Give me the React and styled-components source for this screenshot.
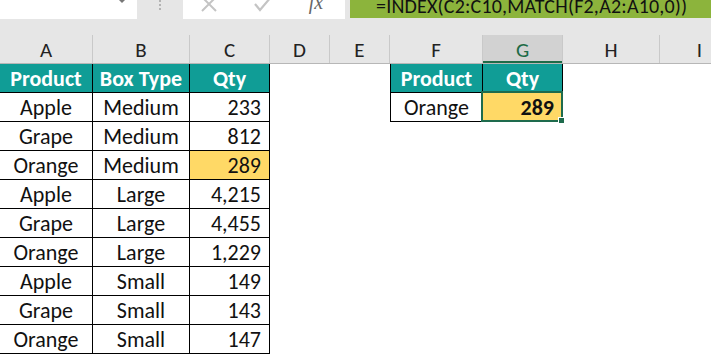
import React from 'react';
import styled, {createGlobalStyle, css} from 'styled-components';

const GlobalStyle = createGlobalStyle`
  html, body {
    margin: 0;
    padding: 0;
    background: #fff;
    overflow: hidden;
  }
  body {
    font-family: Carlito, Lato, "Open Sans", sans-serif;
  }
`;

const COLS = [
  {key: 'A', width: 93},
  {key: 'B', width: 97},
  {key: 'C', width: 80},
  {key: 'D', width: 60},
  {key: 'E', width: 60},
  {key: 'F', width: 93},
  {key: 'G', width: 80},
  {key: 'H', width: 97},
  {key: 'I', width: 80},
];

const gridTemplate = COLS.map((c) => `${c.width}px`).join(' ');

const Chrome = styled.div`
  background: #e6e6e6;
  overflow: hidden;
`;

const FormulaBar = styled.div`
  display: flex;
  align-items: stretch;
  height: 30px;
  margin-top: -11px;
`;

const NameBox = styled.div`
  width: 137px;
  background: #fff;
  display: flex;
  justify-content: flex-end;
  align-items: flex-end;
  padding-right: 10px;
  box-sizing: border-box;
`;

const Caret = styled.div`
  width: 0;
  height: 0;
  border-left: 5px solid transparent;
  border-right: 5px solid transparent;
  border-top: 5px solid #777;
  margin-bottom: 16px;
`;

const Splitter = styled.div`
  width: 46px;
  display: flex;
  justify-content: center;
  align-items: flex-end;
  padding-bottom: 9px;
  box-sizing: border-box;
`;

const Dots = styled.div`
  width: 2px;
  height: 10px;
  background: repeating-linear-gradient(#b3b3b3 0 2px, transparent 2px 4px);
`;

const FxBox = styled.div`
  width: 162px;
  background: #fff;
  display: flex;
  align-items: flex-end;
  padding-bottom: 6px;
  box-sizing: border-box;
`;

const IconSlot = styled.div`
  width: ${(p) => p.w}px;
  margin-left: ${(p) => p.ml}px;
  display: flex;
  justify-content: center;
`;

const Fx = styled.span`
  font-family: "Liberation Serif", serif;
  font-style: italic;
  font-size: 20px;
  color: #666;
  line-height: 1;
  margin-bottom: 1px;
`;

const FormulaInput = styled.div`
  flex: 1;
  margin-left: 5px;
  height: 29px;
  background: #8cb43c;
  display: flex;
  align-items: flex-end;
  padding-left: 26px;
  font-family: Carlito, Lato, sans-serif;
  font-size: 20px;
  color: #111;
  white-space: nowrap;
  overflow: hidden;
`;

const FormulaText = styled.span`
  line-height: 1;
  margin-bottom: 2px;
  letter-spacing: 0.2px;
`;

const HeaderRow = styled.div`
  display: grid;
  grid-template-columns: ${gridTemplate};
  margin-top: 16px;
  height: 28px;
  border-bottom: 1px solid #b7b7b7;
`;

const ColHead = styled.div`
  display: flex;
  align-items: center;
  justify-content: center;
  font-size: 21px;
  color: #222;
  border-right: 1px solid #c9c9c9;
  box-sizing: border-box;
  padding-top: 2px;
  ${(p) => p.active && css`
    background: #d2d2d2;
    color: #1e6b47;
    box-shadow: inset 0 -2px 0 #1e6b47;
  `}
`;

const Sheet = styled.div`
  display: grid;
  grid-template-columns: ${gridTemplate};
  grid-auto-rows: 29px;
  background: #fff;
`;

const Cell = styled.div`
  position: relative;
  display: flex;
  align-items: center;
  justify-content: ${(p) => (p.align === 'right' ? 'flex-end' : 'center')};
  padding-right: ${(p) => (p.align === 'right' ? '8px' : '0')};
  box-sizing: border-box;
  font-size: 22px;
  color: #111;
  white-space: nowrap;
  ${(p) => p.boxed && css`
    border-right: 1px solid #000;
    border-bottom: 1px solid #000;
  `}
  ${(p) => p.first && css`
    border-left: 1px solid #000;
  `}
  ${(p) => p.head && css`
    background: #109d96;
    color: #fff;
    font-weight: 700;
  `}
  ${(p) => p.hot && css`
    background: #ffd966;
  `}
  ${(p) => p.bold && css`
    font-weight: 700;
  `}
`;

const Selection = styled.div`
  position: absolute;
  left: -2px;
  top: -2px;
  right: -1px;
  bottom: -1px;
  border: 2px solid #1e6b4d;
  pointer-events: none;
`;

const FillHandle = styled.div`
  position: absolute;
  right: -4px;
  bottom: -4px;
  width: 5px;
  height: 5px;
  background: #1e6b4d;
  border: 1px solid #fff;
`;

const data = [
  ['Apple', 'Medium', '233'],
  ['Grape', 'Medium', '812'],
  ['Orange', 'Medium', '289'],
  ['Apple', 'Large', '4,215'],
  ['Grape', 'Large', '4,455'],
  ['Orange', 'Large', '1,229'],
  ['Apple', 'Small', '149'],
  ['Grape', 'Small', '143'],
  ['Orange', 'Small', '147'],
];

const CrossIcon = () => (
  <svg width="18" height="18" viewBox="0 0 18 18">
    <path d="M2 2 L16 16 M16 2 L2 16" stroke="#c4c4c4" strokeWidth="2" fill="none" />
  </svg>
);

const CheckIcon = () => (
  <svg width="20" height="18" viewBox="0 0 20 18">
    <path d="M2 9 L7 15 L18 2" stroke="#c4c4c4" strokeWidth="2.2" fill="none" />
  </svg>
);

const renderRow = (rowIndex) => {
  const cells = [];
  if (rowIndex === 0) {
    cells.push(<Cell key="a" boxed head>Product</Cell>);
    cells.push(<Cell key="b" boxed head>Box Type</Cell>);
    cells.push(<Cell key="c" boxed head>Qty</Cell>);
  } else {
    const [product, box, qty] = data[rowIndex - 1];
    cells.push(<Cell key="a" boxed>{product}</Cell>);
    cells.push(<Cell key="b" boxed>{box}</Cell>);
    cells.push(<Cell key="c" boxed align="right" hot={rowIndex === 3}>{qty}</Cell>);
  }
  cells.push(<Cell key="d" />);
  cells.push(<Cell key="e" />);
  if (rowIndex === 0) {
    cells.push(<Cell key="f" boxed first head>Product</Cell>);
    cells.push(<Cell key="g" boxed head>Qty</Cell>);
  } else if (rowIndex === 1) {
    cells.push(<Cell key="f" boxed first>Orange</Cell>);
    cells.push(
      <Cell key="g" boxed hot bold align="right">
        289
        <Selection>
          <FillHandle />
        </Selection>
      </Cell>
    );
  } else {
    cells.push(<Cell key="f" />);
    cells.push(<Cell key="g" />);
  }
  cells.push(<Cell key="h" />);
  cells.push(<Cell key="i" />);
  return cells;
};

const App = () => (
  <>
    <GlobalStyle />
    <Chrome>
      <FormulaBar>
        <NameBox>
          <Caret />
        </NameBox>
        <Splitter>
          <Dots />
        </Splitter>
        <FxBox>
          <IconSlot w={22} ml={15}><CrossIcon /></IconSlot>
          <IconSlot w={24} ml={31}><CheckIcon /></IconSlot>
          <IconSlot w={24} ml={29}><Fx>fx</Fx></IconSlot>
        </FxBox>
        <FormulaInput>
          <FormulaText>=INDEX(C2:C10,MATCH(F2,A2:A10,0))</FormulaText>
        </FormulaInput>
      </FormulaBar>
      <HeaderRow>
        {COLS.map((c) => (
          <ColHead key={c.key} active={c.key === 'G'}>{c.key}</ColHead>
        ))}
      </HeaderRow>
    </Chrome>
    <Sheet>
      {Array.from({length: 10}, (_, i) => renderRow(i))}
    </Sheet>
  </>
);

export default App;
